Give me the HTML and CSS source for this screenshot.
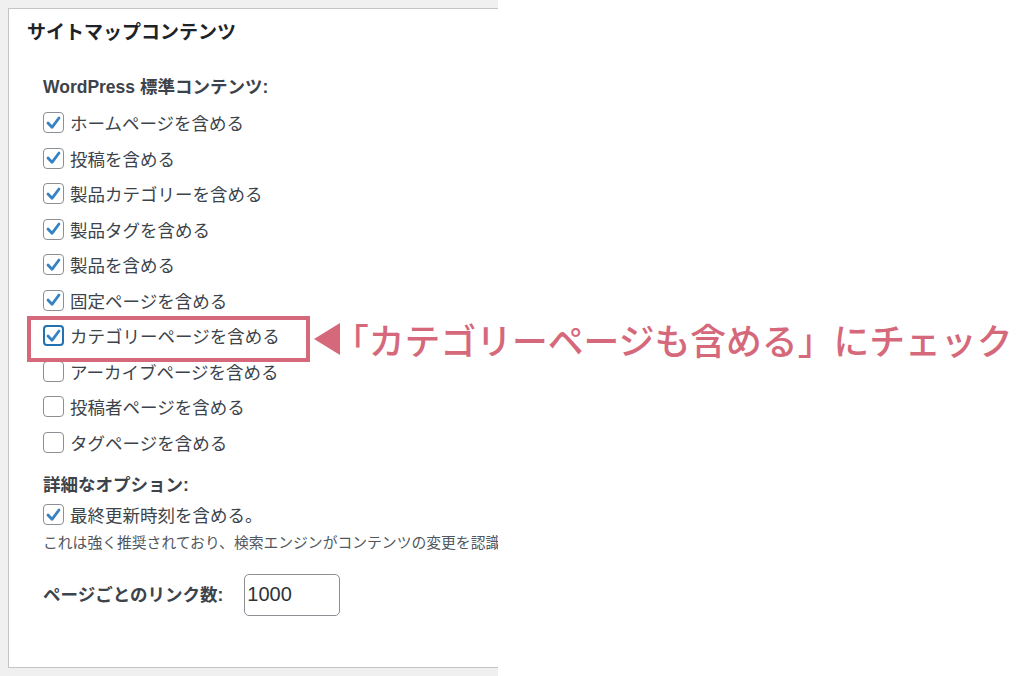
FILE: index.html
```html
<!DOCTYPE html>
<html lang="ja">

<head>
  <meta charset="UTF-8">
  <meta name="viewport" content="width=device-width, initial-scale=1.0">
  <title>サイトマップコンテンツ</title>

  <link rel="stylesheet" href="styles.css">
</head>

<body>
  <main class="canvas">
    <section class="shot">
      <div class="panel">
        <h2 class="panel-title">サイトマップコンテンツ</h2>

        <div class="panel-body">
          <h3 class="group-title">WordPress 標準コンテンツ:</h3>
          <ul class="check-list">
            <li class="check-row"><span class="box"><svg viewBox="0 0 21 21"><path d="M5 11l4 4.3 7-9.3" /></svg></span>ホームページを含める</li>
            <li class="check-row"><span class="box"><svg viewBox="0 0 21 21"><path d="M5 11l4 4.3 7-9.3" /></svg></span>投稿を含める</li>
            <li class="check-row"><span class="box"><svg viewBox="0 0 21 21"><path d="M5 11l4 4.3 7-9.3" /></svg></span>製品カテゴリーを含める</li>
            <li class="check-row"><span class="box"><svg viewBox="0 0 21 21"><path d="M5 11l4 4.3 7-9.3" /></svg></span>製品タグを含める</li>
            <li class="check-row"><span class="box"><svg viewBox="0 0 21 21"><path d="M5 11l4 4.3 7-9.3" /></svg></span>製品を含める</li>
            <li class="check-row"><span class="box"><svg viewBox="0 0 21 21"><path d="M5 11l4 4.3 7-9.3" /></svg></span>固定ページを含める</li>
            <li class="check-row"><span class="box box-focus"><svg viewBox="0 0 21 21"><path d="M5 11l4 4.3 7-9.3" /></svg></span>カテゴリーページを含める</li>
            <li class="check-row"><span class="box"></span>アーカイブページを含める</li>
            <li class="check-row"><span class="box"></span>投稿者ページを含める</li>
            <li class="check-row"><span class="box"></span>タグページを含める</li>
          </ul>

          <h3 class="group-title group-gap">詳細なオプション:</h3>
          <div class="check-row"><span class="box"><svg viewBox="0 0 21 21"><path d="M5 11l4 4.3 7-9.3" /></svg></span>最終更新時刻を含める。</div>
          <p class="hint">これは強く推奨されており、検索エンジンがコンテンツの変更を認識</p>

          <div class="link-row">
            <label class="group-title" for="links">ページごとのリンク数:</label>
            <input class="num-input" id="links" value="1000" />
          </div>
        </div>
      </div>
    </section>

    <!-- annotation drawn over the screenshot -->
    <div class="callout">
      <span class="callout-box"></span>
      <span class="callout-arrow"></span>
      <span class="callout-text">「カテゴリーページも含める」にチェック</span>
    </div>
  </main>
</body>

</html>
```

FILE: styles.css
```css
* {
  box-sizing: border-box;
}

body {
  background: #fff;
  font-family: "Liberation Sans", "Noto Sans CJK JP", sans-serif;
  margin: 0;
}

.canvas {
  height: 676px;
  position: relative;
  width: 1024px;
}

.shot {
  background: #f0f0f1;
  height: 676px;
  overflow: hidden;
  padding: 8px 0 8px 8px;
  width: 498px;
}

.panel {
  background: #fff;
  border: 1px solid #c3c4c7;
  border-right: none;
  height: 660px;
  width: 500px;
}

.panel-title {
  color: #1d2327;
  font-size: 19px;
  font-weight: bold;
  line-height: 24px;
  margin: 12px 0 0 18px;
}

.panel-body {
  padding-left: 34px;
  padding-top: 30px;
}

.group-title {
  color: #3c434a;
  font-size: 17.5px;
  font-weight: bold;
  line-height: 24px;
  margin: 0;
}

.group-gap {
  margin-top: 13px;
}

.check-list {
  list-style: none;
  margin: 6px 0 0;
  padding: 0;
}

.check-row {
  align-items: center;
  color: #3c434a;
  display: flex;
  font-size: 17.5px;
  height: 35.5px;
  white-space: nowrap;
}

.box {
  border: 1.5px solid #8c8f94;
  border-radius: 4px;
  display: inline-block;
  flex: none;
  height: 21px;
  margin-right: 6px;
  width: 21px;
}

.box svg {
  display: block;
  fill: none;
  height: 21px;
  margin: -1.5px;
  stroke: #3582c4;
  stroke-linecap: round;
  stroke-linejoin: round;
  stroke-width: 2.8;
  width: 21px;
}

.box-focus {
  border: 2px solid #2271b1;
}

.box-focus svg {
  margin: -2px;
}

.hint {
  color: #50575e;
  font-size: 14.8px;
  line-height: 20px;
  margin: 0;
  white-space: nowrap;
}

.link-row {
  align-items: center;
  display: flex;
  gap: 21px;
  margin-top: 21px;
}

.num-input {
  border: 1px solid #8c8f94;
  border-radius: 5px;
  color: #2c3338;
  flex: none;
  font-family: "Liberation Sans", sans-serif;
  font-size: 20px;
  height: 42px;
  padding: 0 2px;
  width: 96px;
}

.callout {
  align-items: center;
  display: flex;
  left: 27px;
  position: absolute;
  top: 316px;
}

.callout-box {
  border: 4px solid #d5697b;
  height: 46px;
  width: 283px;
}

.callout-arrow {
  border-bottom: 16px solid transparent;
  border-right: 26px solid #d5697b;
  border-top: 16px solid transparent;
  height: 0;
  margin-left: 4px;
  width: 0;
}

.callout-text {
  color: #d5697b;
  font-family: "Noto Sans CJK JP", sans-serif;
  font-size: 35.8px;
  font-weight: 500;
  line-height: 46px;
  margin-left: -7px;
  white-space: nowrap;
}
```
